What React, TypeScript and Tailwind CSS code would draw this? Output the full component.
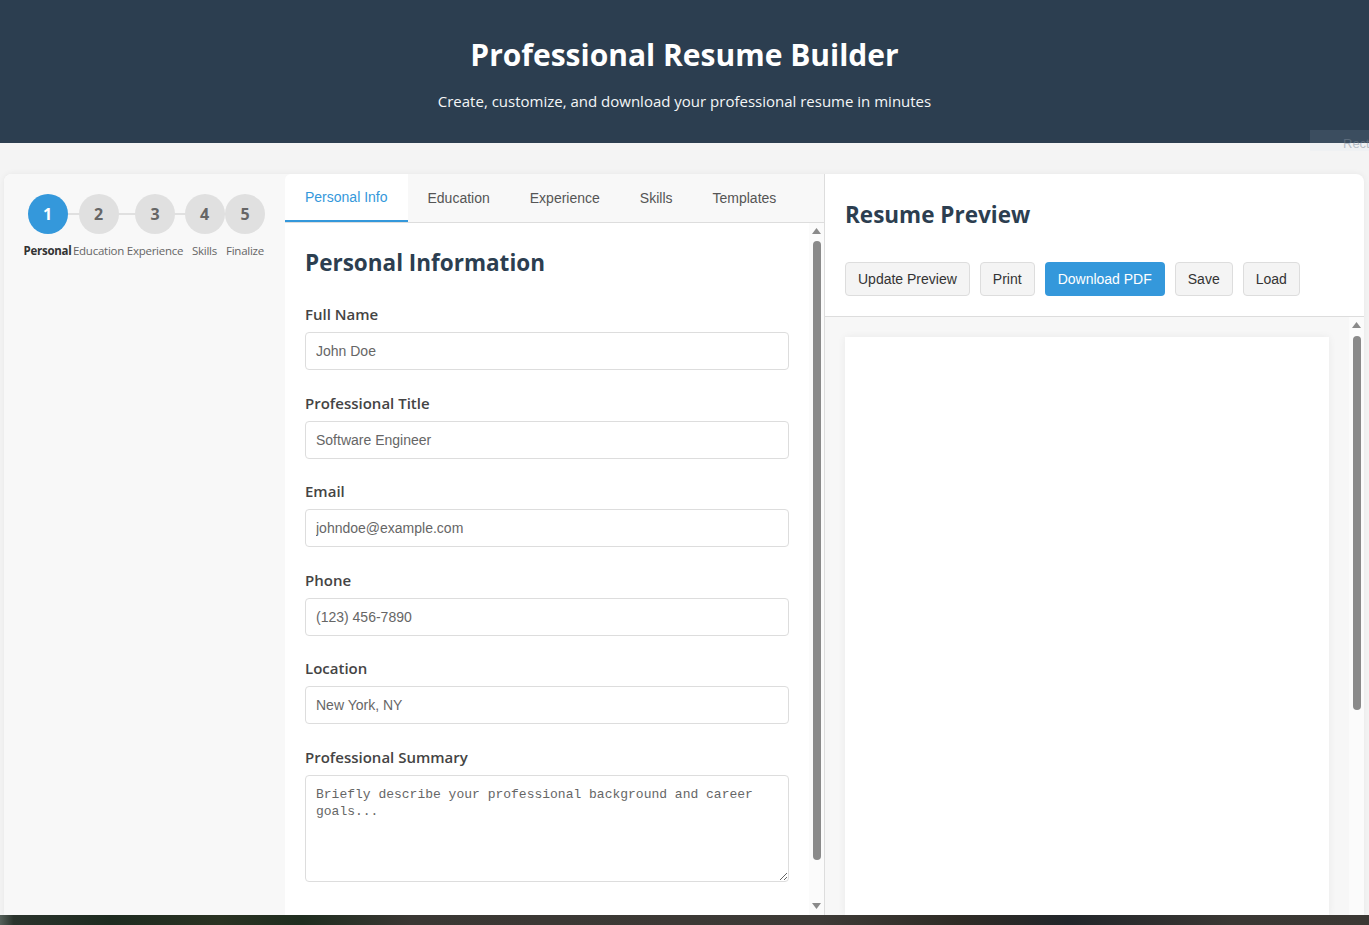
import React from "react";

const head = { fontFamily: '"Open Sans", "Noto Sans", sans-serif' };
const arial = { fontFamily: '"Liberation Sans", Arial, sans-serif' };
const mono = { fontFamily: '"Liberation Mono", "DejaVu Sans Mono", monospace' };

function Arrow({ up }: { up?: boolean }) {
  return (
    <svg width="9" height="6" viewBox="0 0 9 6" className="block">
      {up ? <path d="M0 6 L4.5 0 L9 6 Z" fill="#8a8a8a" /> : <path d="M0 0 L9 0 L4.5 6 Z" fill="#8a8a8a" />}
    </svg>
  );
}

function FakeScroll({ thumbTop, thumbH, downAt }: { thumbTop: number; thumbH: number; downAt?: number }) {
  return (
    <div className="w-[15px] shrink-0 flex flex-col items-center bg-[#fbfbfb]">
      <div className="mt-[5px]"><Arrow up /></div>
      <div className="w-[8px] rounded-full bg-[#8a8a8a]" style={{ marginTop: thumbTop, height: thumbH }} />
      {downAt !== undefined && <div style={{ marginTop: downAt }}><Arrow /></div>}
    </div>
  );
}

const steps = [
  { n: "1", label: "Personal", w: "w-[47px]" },
  { n: "2", label: "Education", w: "w-[55px]" },
  { n: "3", label: "Experience", w: "w-[58px]" },
  { n: "4", label: "Skills", w: "w-[41px]" },
  { n: "5", label: "Finalize", w: "w-[40px]" },
];

const fields = [
  { label: "Full Name", ph: "John Doe" },
  { label: "Professional Title", ph: "Software Engineer" },
  { label: "Email", ph: "johndoe@example.com" },
  { label: "Phone", ph: "(123) 456-7890" },
  { label: "Location", ph: "New York, NY" },
];

export default function App() {
  return (
    <div className="h-[925px] w-full overflow-hidden flex flex-col bg-[#f4f4f4] relative">
      <header className="h-[143px] shrink-0 bg-[#2c3e50] flex flex-col items-center pt-[34px]" style={head}>
        <h1 className="text-[30px] leading-[42px] font-bold text-white">Professional Resume Builder</h1>
        <p className="mt-[13px] text-[15px] leading-[24px] text-[#f4f6f7]">Create, customize, and download your professional resume in minutes</p>
      </header>

      <div className="absolute top-[130px] right-0 w-[59px] h-[21px] bg-[#c8d8ee]/10 overflow-hidden">
        <span className="ml-[33px] text-[13px] leading-[21px] text-[#7d8a98]/50" style={arial}>Rect</span>
      </div>

      <main className="flex-1 min-h-0 pt-[31px] pl-[4px] pr-[5px]">
        <div className="h-full flex rounded-t-[8px] overflow-hidden bg-white shadow-[0_0_6px_rgba(0,0,0,0.06)]">
          {/* sidebar */}
          <aside className="w-[281px] shrink-0 bg-[#f8f8f8] px-[20px] pt-[20px]" style={head}>
            <div className="relative flex">
              <div className="absolute left-[23px] right-[20px] top-[19px] h-[2px] bg-[#e0e0e0]" />
              {steps.map((s, i) => (
                <div key={s.n} className={`${s.w} relative flex flex-col items-center`}>
                  <div
                    className={`w-[40px] h-[40px] rounded-full flex items-center justify-center text-[16px] font-bold ${
                      i === 0 ? "bg-[#3498db] text-white" : "bg-[#e0e0e0] text-[#666]"
                    }`}
                  >
                    {s.n}
                  </div>
                  <div
                    className={`mt-[9px] text-[11.5px] leading-[16px] whitespace-nowrap tracking-[-0.25px] ${
                      i === 0 ? "font-bold text-[#333]" : "text-[#666]"
                    }`}
                  >
                    {s.label}
                  </div>
                </div>
              ))}
            </div>
          </aside>

          {/* middle */}
          <section className="w-[540px] shrink-0 border-r border-[#ddd] flex flex-col">
            <nav className="h-[49px] shrink-0 bg-[#f8f8f8] border-b border-[#ddd] flex" style={arial}>
              <div className="px-[20px] h-full bg-white border-b-2 border-[#3498db] rounded-tl-[6px] flex items-center text-[14px] text-[#3498db] -mb-px">Personal Info</div>
              {["Education", "Experience", "Skills", "Templates"].map((t) => (
                <div key={t} className="px-[20px] h-full flex items-center text-[14px] text-[#555]">{t}</div>
              ))}
            </nav>
            <div className="flex-1 min-h-0 flex">
              <div className="flex-1 min-w-0 pl-[20px] pr-[20px] pt-[20px]">
                <h2 className="text-[22.5px] leading-[40px] font-bold text-[#2c3e50]" style={head}>Personal Information</h2>
                <div className="mt-[20px] flex flex-col gap-[21.6px]">
                  {fields.map((f) => (
                    <div key={f.label} className="flex flex-col gap-[7px]">
                      <label className="text-[15px] leading-[22px] font-semibold text-[#444]" style={head}>{f.label}</label>
                      <input
                        placeholder={f.ph}
                        className="h-[38px] w-full border border-[#ddd] rounded-[4px] px-[10px] text-[14px] text-[#333] placeholder:text-[#666] outline-none"
                        style={arial}
                      />
                    </div>
                  ))}
                  <div className="flex flex-col gap-[7px]">
                    <label className="text-[15px] leading-[22px] font-semibold text-[#444]" style={head}>Professional Summary</label>
                    <textarea
                      placeholder="Briefly describe your professional background and career goals..."
                      className="h-[107px] w-full border border-[#ddd] rounded-[4px] px-[10px] pt-[10px] text-[13px] leading-[17px] text-[#333] placeholder:text-[#666] outline-none"
                      style={mono}
                    />
                  </div>
                </div>
              </div>
              <FakeScroll thumbTop={7} thumbH={619} downAt={43} />
            </div>
          </section>

          {/* right */}
          <section className="flex-1 min-w-0 flex flex-col">
            <div className="px-[20px] pt-[20px] pb-[20px] border-b border-[#ddd]">
              <h2 className="text-[22.5px] leading-[42px] font-bold text-[#2c3e50]" style={head}>Resume Preview</h2>
              <div className="mt-[26px] flex gap-[10px]" style={arial}>
                {["Update Preview", "Print"].map((b) => (
                  <button key={b} className="h-[34px] px-[12px] bg-[#f4f4f4] border border-[#ddd] rounded-[4px] text-[14px] text-[#333]">{b}</button>
                ))}
                <button className="h-[34px] px-[13px] bg-[#3498db] rounded-[4px] text-[14px] text-white">Download PDF</button>
                {["Save", "Load"].map((b) => (
                  <button key={b} className="h-[34px] px-[12px] bg-[#f4f4f4] border border-[#ddd] rounded-[4px] text-[14px] text-[#333]">{b}</button>
                ))}
              </div>
            </div>
            <div className="flex-1 min-h-0 flex bg-[#f7f7f7]">
              <div className="flex-1 min-w-0 pl-[20px] pr-[20px] pt-[20px]">
                <div className="h-full bg-white shadow-[0_0_8px_rgba(0,0,0,0.06)]" />
              </div>
              <FakeScroll thumbTop={8} thumbH={374} />
            </div>
          </section>
        </div>
      </main>

      <div className="h-[10px] shrink-0 bg-[linear-gradient(90deg,#55605a_0%,#2a332c_1%,#1e2b20_8%,#2a3222_16%,#1f2d1f_22%,#3a3733_30%,#3d3a36_60%,#2f2b25_70%,#22262a_78%,#3a3733_90%,#3b3834_100%)]" />
    </div>
  );
}
